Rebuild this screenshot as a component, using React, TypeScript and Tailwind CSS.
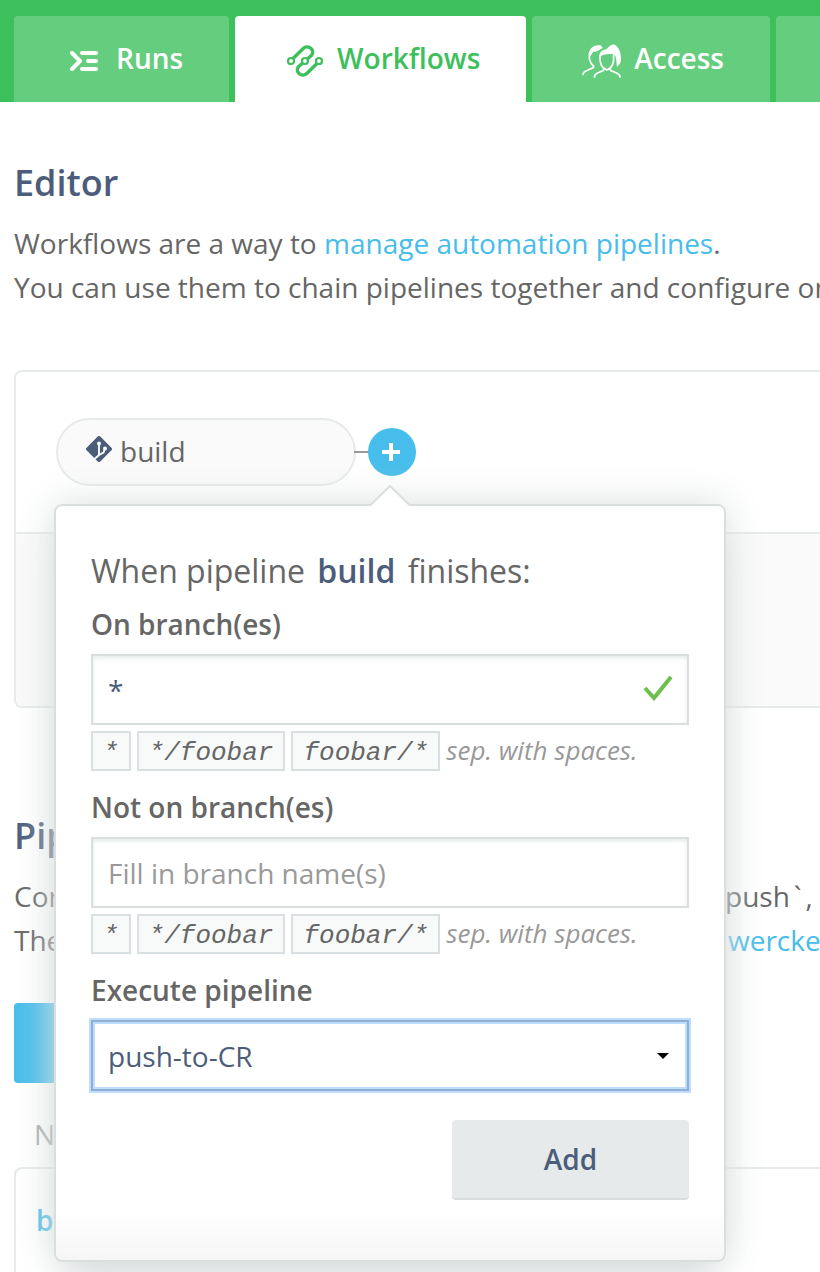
import { useState } from "react";
import type { ReactNode } from "react";

function RunsIcon() {
  return (
    <svg width="28" height="20" viewBox="0 0 28 20" fill="none" stroke="currentColor" strokeWidth="4" strokeLinecap="round" strokeLinejoin="round" aria-hidden="true">
      <path d="M2 2l8 8-8 8M12 2h14M18 10h8M12 18h14" />
    </svg>
  );
}

function WorkflowsIcon() {
  return (
    <svg width="36" height="32" viewBox="0 0 36 32" fill="none" stroke="currentColor" strokeWidth="3.400" aria-hidden="true">
      <circle cx="4" cy="16" r="3" strokeWidth="2.200" />
      <circle cx="18" cy="16" r="3" strokeWidth="2.200" />
      <circle cx="32" cy="16" r="3" strokeWidth="2.200" />
      <path d="M6 13.500l10-9.800c4.500-4.500 12.800 1 8.600 6.600l-4.400 3.700" />
      <path d="M30 18.500l-10 9.800c-4.500 4.500-12.800-1-8.600-6.600l4.400-3.700" />
    </svg>
  );
}

function AccessIcon() {
  return (
    <svg width="40" height="34" viewBox="0 0 40 34" fill="none" stroke="currentColor" strokeWidth="1.700" strokeLinecap="round" strokeLinejoin="round" aria-hidden="true">
      <path d="M8 9c-1.500 5-.5 9.500 3.500 13v1.500L5 26.500c-2.500 1-4 2-4 4" />
      <path d="M6.500 11C7 4 12 0 19 1.500l1.800 2.500C17.500 5 15.500 8.500 11.500 7.500L8.500 12z" fill="currentColor" stroke="none" />
      <path d="M18 12c-.5 7 1 12 7 14 5-2 7.500-7 6.500-15M21.500 25v1.500l-6 2.500c-2 1-3 2-3 4M28.500 25v1.500l6 2.500c2 1 3.500 2 3.500 4" />
      <path d="M17 15c-.5-6 2.500-9 8-10 3-4 6-5.500 9-3.500 5 4 6 14 4 18l-3 3.500c-1-5 0-10-3-12.500-3-1-11-.5-13.500 2z" fill="currentColor" stroke="none" />
    </svg>
  );
}

function GitIcon() {
  return (
    <svg width="26" height="26" viewBox="0 0 26 26" className="text-[#4c5d7b]" aria-hidden="true">
      <path d="M11.700.6a1.800 1.800 0 0 1 2.600 0l11.100 11.100a1.800 1.800 0 0 1 0 2.600L14.300 25.400a1.800 1.800 0 0 1-2.600 0L.6 14.300a1.800 1.800 0 0 1 0-2.600z" fill="currentColor" />
      <path d="M13 7v12M19 12.500l-1.500 4L13 19l-4.500 4" fill="none" stroke="#fafafa" strokeWidth="1.900" />
      <circle cx="13" cy="7.500" r="2" fill="#fafafa" />
      <circle cx="19" cy="12.500" r="2" fill="#fafafa" />
    </svg>
  );
}

function Tab({ icon, label, active = false }: { icon: ReactNode; label: string; active?: boolean }) {
  return (
    <a
      href="#"
      aria-current={active ? "page" : undefined}
      className={`flex shrink-0 items-center gap-2 rounded-t px-[46px] pb-0.5 text-[28px] leading-[84px] font-semibold ${
        active ? "bg-white text-[#3dc05b]" : "bg-[#65cd7e] text-white"
      }`}
    >
      <span className="flex w-12 justify-center pt-1.5">{icon}</span>
      {label}
    </a>
  );
}

function Hints() {
  return (
    <div className="mt-1.5 flex h-10 items-center gap-1.5 text-[26px] text-[#999] italic">
      {["*", "*/foobar", "foobar/*"].map((hint) => (
        <code
          key={hint}
          className="border-2 border-[#dadfe1] bg-[#f8faf9] px-2.5 pt-1 font-['Liberation_Mono',monospace] leading-8 text-[#666]"
        >
          {hint}
        </code>
      ))}
      <span className="pb-0.5">sep. with spaces.</span>
    </div>
  );
}

const field =
  "block h-[71px] w-full border-2 border-[#dadfde] bg-white px-[15px] text-[28px] text-[#4c5d7b] shadow-[inset_0_2px_4px_#e6eaea] outline-none placeholder:text-[#999]";

function PipelineForm() {
  const [branches, setBranches] = useState("*");
  const [excluded, setExcluded] = useState("");
  return (
    <form
      onSubmit={(event) => event.preventDefault()}
      className="absolute top-[76px] left-1/2 z-10 -ml-[338px] w-[672px] rounded-lg border-2 border-[#dadfde] bg-linear-to-t from-[#f6f6f6] to-white to-[48px] px-[35px] pt-[43px] pb-[60px] shadow-[0_0_40px_#dadfde,0_24px_36px_-16px_#d2d4d8]"
    >
      <svg width="40" height="22" viewBox="0 0 40 22" className="absolute -top-[21px] left-1/2 -ml-5" aria-hidden="true">
        <path d="M0 22V20.500L20 1l20 19.500V22z" fill="#fff" />
        <path d="M0 20.500L20 1l20 19.500" fill="none" stroke="#dadfde" strokeWidth="2" />
      </svg>
      <h2 className="text-[32px] leading-[44px]">
        When pipeline <strong className="mx-1 font-semibold text-[#4c5d7b]">build</strong> finishes:
      </h2>

      <label htmlFor="on" className="mt-[9px] mb-2 block leading-[44px] font-semibold">On branch(es)</label>
      <div className="relative">
        <input id="on" className={field} value={branches} onChange={(event) => setBranches(event.target.value)} />
        <svg width="30" height="26" viewBox="0 0 30 26" className="absolute top-[21px] right-4" fill="none" stroke="#6cbf4b" strokeWidth="4" aria-hidden="true">
          <path d="M2 13l9 10L28 2" />
        </svg>
      </div>
      <Hints />

      <label htmlFor="not-on" className="mt-3.5 mb-2 block leading-[44px] font-semibold">Not on branch(es)</label>
      <input id="not-on" className={field} placeholder="Fill in branch name(s)" value={excluded} onChange={(event) => setExcluded(event.target.value)} />
      <Hints />

      <label htmlFor="pipeline" className="mt-3.5 mb-2 block leading-[44px] font-semibold">Execute pipeline</label>
      <div className="relative">
        <select
          id="pipeline"
          className="block h-[71px] w-full appearance-none border-2 border-[#8eafd2] bg-white px-[15px] text-[28px] text-[#4c5d7b] shadow-[0_0_0_2px_#bfdeff,inset_0_0_0_2px_#bfdeff] outline-none"
        >
          <option>push-to-CR</option>
        </select>
        <svg width="12" height="6" viewBox="0 0 12 6" className="pointer-events-none absolute top-[33px] right-5" aria-hidden="true">
          <path d="M0 0h12L6 6z" />
        </svg>
      </div>

      <button type="submit" className="mt-[29px] ml-auto block h-20 w-[237px] rounded border-b-2 border-[#d9dddd] bg-[#e6eaea] font-semibold text-[#4c5d7b]">
        Add
      </button>
    </form>
  );
}

export default function App() {
  return (
    <div className="overflow-x-clip bg-white font-['Open_Sans',sans-serif] text-[28px] leading-[44px] text-[#666]">
      <nav className="flex gap-1.5 bg-[#3dc05b] pt-4 pl-3.5">
        <Tab icon={<RunsIcon />} label="Runs" />
        <Tab icon={<WorkflowsIcon />} label="Workflows" active />
        <Tab icon={<AccessIcon />} label="Access" />
        <a href="#" aria-label="Options" className="grow rounded-tl bg-[#65cd7e]" />
      </nav>

      <main className="pl-3.5 whitespace-nowrap">
        <section className="pt-[59px]">
          <h1 className="text-[36px] font-semibold text-[#4c5d7b]">Editor</h1>
          <p className="mt-4">
            Workflows are a way to <a href="#" className="text-[#46bdea]">manage automation pipelines</a>.
            <br />
            You can use them to chain pipelines together and configure on
          </p>

          <div className="mt-[61px] rounded-l-lg border-2 border-r-0 border-[#e6eaea]">
            <div className="flex h-40 items-center pl-10">
              <div className="flex h-[68px] w-[300px] items-center gap-2 rounded-full border-2 border-[#e6eaea] bg-[#fafafa] pl-7">
                <span className="pb-1.5"><GitIcon /></span>
                <span className="pb-0.5">build</span>
              </div>
              <span className="-ml-0.5 h-0.5 w-3.5 bg-[#999]" />
              <div className="relative">
                <button type="button" aria-label="Add pipeline" className="flex size-12 items-center justify-center rounded-full bg-[#46bdea] pr-0.5">
                  <svg width="18" height="18" viewBox="0 0 18 18" stroke="#fff" strokeWidth="4" aria-hidden="true">
                    <path d="M9 0v18M0 9h18" />
                  </svg>
                </button>
                <PipelineForm />
              </div>
            </div>
            <div className="h-[174px] rounded-bl-lg border-t-2 border-[#e6eaea] bg-[#fafafa]" />
          </div>
        </section>

        <section className="pt-[106px]">
          <h1 className="text-[36px] font-semibold text-[#4c5d7b]">Pipelines</h1>
          <p className="mt-4">
            <span className="inline-block w-[711px]">Configure</span>push<span className="px-1">`</span>,
            <br />
            <span className="inline-block w-[714px]">The</span>
            <a href="#" className="text-[#46bdea]">wercker</a>
          </p>
          <button type="button" aria-label="Add new pipeline" className="mt-[41px] block h-20 w-[300px] rounded bg-[#46bdea]" />
          <div className="mt-[29px] pl-5 text-[#aaa]">Name</div>
          <div className="mt-[11px] rounded-tl-lg border-2 border-r-0 border-b-0 border-[#e6eaea] pt-[29px] pb-[30px] pl-5">
            <a href="#" className="font-semibold text-[#46bdea]">build</a>
          </div>
        </section>
      </main>
    </div>
  );
}
